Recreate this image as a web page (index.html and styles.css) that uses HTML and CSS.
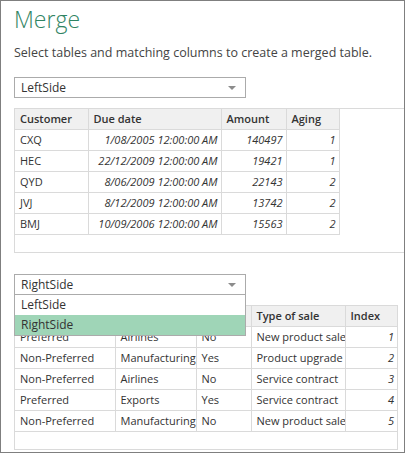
FILE: index.html
```html
<!DOCTYPE html>
<html lang="en">
<head>
    <meta charset="UTF-8">
    <title>Merge</title>
    <link rel="stylesheet" href="styles.css">
</head>
<body>
    <div class="dialog">
        <h1 class="title">Merge</h1>
        <p class="intro">Select tables and matching columns to create a merged table.</p>

        <div class="picker">
            <div class="picker-box">LeftSide<span class="arrow"></span></div>
        </div>

        <div class="grid-panel wide">
            <table class="grid left-grid">
                <colgroup>
                    <col style="width:73px">
                    <col style="width:133px">
                    <col style="width:65px">
                    <col style="width:53px">
                </colgroup>
                <thead>
                    <tr><th>Customer</th><th>Due date</th><th>Amount</th><th>Aging</th></tr>
                </thead>
                <tbody>
                    <tr><td>CXQ</td><td class="num">1/08/2005 12:00:00 AM</td><td class="num">140497</td><td class="num">1</td></tr>
                    <tr><td>HEC</td><td class="num">22/12/2009 12:00:00 AM</td><td class="num">19421</td><td class="num">1</td></tr>
                    <tr><td>QYD</td><td class="num">8/06/2009 12:00:00 AM</td><td class="num">22143</td><td class="num">2</td></tr>
                    <tr><td>JVJ</td><td class="num">8/12/2009 12:00:00 AM</td><td class="num">13742</td><td class="num">2</td></tr>
                    <tr><td>BMJ</td><td class="num">10/09/2006 12:00:00 AM</td><td class="num">15563</td><td class="num">2</td></tr>
                </tbody>
            </table>
        </div>

        <div class="picker second">
            <div class="picker-box">RightSide<span class="arrow"></span></div>
            <ul class="picker-list">
                <li>LeftSide</li>
                <li class="selected">RightSide</li>
            </ul>
        </div>

        <div class="grid-panel">
            <table class="grid right-grid">
                <colgroup>
                    <col style="width:100px">
                    <col style="width:81px">
                    <col style="width:55px">
                    <col style="width:94px">
                    <col style="width:52px">
                </colgroup>
                <thead>
                    <tr><th>Customer type</th><th>Industry</th><th>Repeat</th><th>Type of sale</th><th>Index</th></tr>
                </thead>
                <tbody>
                    <tr><td>Preferred</td><td>Airlines</td><td>No</td><td>New product sale</td><td class="num">1</td></tr>
                    <tr><td>Non-Preferred</td><td>Manufacturing</td><td>Yes</td><td>Product upgrade</td><td class="num">2</td></tr>
                    <tr><td>Non-Preferred</td><td>Airlines</td><td>No</td><td>Service contract</td><td class="num">3</td></tr>
                    <tr><td>Preferred</td><td>Exports</td><td>Yes</td><td>Service contract</td><td class="num">4</td></tr>
                    <tr><td>Non-Preferred</td><td>Manufacturing</td><td>No</td><td>New product sale</td><td class="num">5</td></tr>
                </tbody>
            </table>
        </div>
    </div>
</body>
</html>
```

FILE: styles.css
```css
body {
    margin: 0;
    font-family: "Open Sans", "Noto Sans", sans-serif;
    background-color: #ffffff;
    color: #333;
}

.dialog {
    box-sizing: border-box;
    width: 405px;
    height: 453px;
    border: 1px solid #7f7f7f;
    padding: 0 0 0 13px;
    overflow: hidden;
}

.title {
    margin: 0;
    padding-top: 3px;
    font-size: 23px;
    font-weight: 300;
    line-height: 30px;
    color: #2f8463;
}

.intro {
    margin: 10px 0 0;
    font-size: 12.5px;
    line-height: 18px;
    color: #444;
}

.picker {
    position: relative;
    width: 232px;
    margin-top: 15px;
}

.picker.second {
    margin-top: 21px;
}

.picker-box {
    position: relative;
    box-sizing: border-box;
    height: 21px;
    border: 1px solid #ababab;
    padding: 0 6px;
    font-size: 12px;
    line-height: 19px;
    color: #333;
}

.arrow {
    position: absolute;
    right: 9px;
    top: 8px;
    border-left: 4px solid transparent;
    border-right: 4px solid transparent;
    border-top: 4px solid #8c8c8c;
}

.picker-list {
    position: absolute;
    top: 20px;
    left: 0;
    right: 0;
    margin: 0;
    padding: 0;
    list-style: none;
    background: #fff;
    border: 1px solid #ababab;
    z-index: 2;
}

.picker-list li {
    height: 20px;
    padding: 0 6px;
    font-size: 12px;
    line-height: 20px;
}

.picker-list li.selected {
    background-color: #9fd5b7;
}

.grid-panel {
    box-sizing: border-box;
    display: inline-block;
    vertical-align: top;
    margin-top: 10px;
    border: 1px solid #dadada;
    padding-bottom: 17px;
    background: #fff;
}

.grid-panel.wide {
    width: 420px;
}

.grid {
    border-collapse: collapse;
    table-layout: fixed;
    font-size: 11px;
}

.left-grid {
    width: 324px;
}

.right-grid {
    width: 382px;
}

.grid th,
.grid td {
    height: 20px;
    padding: 0 3px 0 5px;
    border-right: 1px solid #dadada;
    border-bottom: 1px solid #dadada;
    white-space: nowrap;
    overflow: hidden;
    text-align: left;
    line-height: 20px;
}

.grid tr > :last-child {
    border-right: none;
}

.left-grid tr > :last-child {
    border-right: 1px solid #dadada;
}

.grid th {
    background-color: #f0f0f0;
    font-weight: 600;
    color: #333;
}

.grid td {
    color: #333;
}

.grid td.num {
    text-align: right;
    font-style: italic;
}
```
